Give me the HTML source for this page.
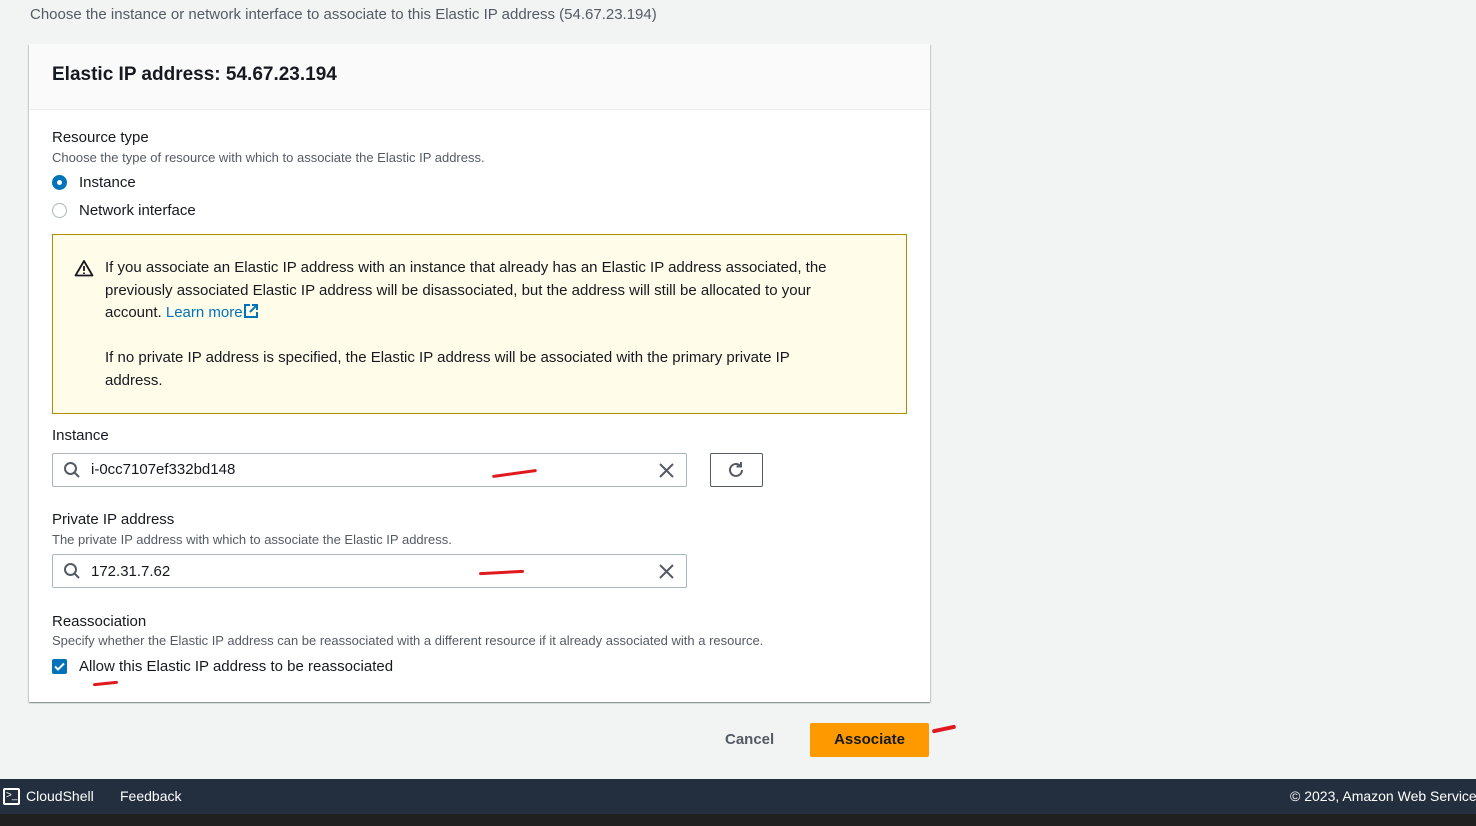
<!DOCTYPE html>
<html><head><style>
*{box-sizing:border-box;margin:0;padding:0}
body{width:1476px;height:826px;overflow:hidden;background:#f2f3f3;font-family:"Liberation Sans",sans-serif;color:#16191f;position:relative;font-size:15px}
.a{position:absolute}
.desc{font-size:13px;color:#545b64}
.lbl{font-size:15px;color:#16191f}
.input{position:absolute;left:52px;width:635px;height:34px;border:1px solid #aab7b8;background:#fff;border-radius:2px}
.red{position:absolute;height:3px;background:#e0191e;border-radius:2px}
</style></head><body>
<div class="a" style="left:30px;top:6px;color:#545b64;font-size:15px">Choose the instance or network interface to associate to this Elastic IP address (54.67.23.194)</div>
<div class="a" style="left:29px;top:44px;width:901px;height:658px;background:#fff;box-shadow:0 1px 1px 0 rgba(0,28,36,.3),1px 1px 1px 0 rgba(0,28,36,.15),-1px 1px 1px 0 rgba(0,28,36,.15)">
 <div style="height:66px;background:#fafafa;border-bottom:1px solid #eaeded;padding:20px 23px;font-size:19px;font-weight:bold">Elastic IP address: 54.67.23.194</div>
</div>
<div class="a lbl" style="left:52px;top:129px">Resource type</div>
<div class="a desc" style="left:52px;top:150px">Choose the type of resource with which to associate the Elastic IP address.</div>
<div class="a" style="left:52px;top:175px;width:15px;height:15px;border-radius:50%;background:#0073bb"><div style="margin:5px;width:5px;height:5px;border-radius:50%;background:#fff"></div></div>
<div class="a lbl" style="left:79px;top:174px">Instance</div>
<div class="a" style="left:52px;top:203px;width:15px;height:15px;border-radius:50%;border:1px solid #aab7b8"></div>
<div class="a lbl" style="left:79px;top:202px">Network interface</div>
<div class="a" style="left:52px;top:234px;width:855px;height:180px;background:#fffce9;border:1px solid #ab8f00"></div>
<svg class="a" style="left:74px;top:259px" width="20" height="18" viewBox="0 0 20 18"><path d="M10 2L18.5 16.5H1.5Z" fill="none" stroke="#16191f" stroke-width="1.8" stroke-linejoin="round"/><path d="M10 7v5M10 13.5v1.5" stroke="#16191f" stroke-width="1.8"/></svg>
<div class="a" style="left:105px;top:257px;width:735px;line-height:22.5px;font-size:15px">If you associate an Elastic IP address with an instance that already has an Elastic IP address associated, the previously associated Elastic IP address will be disassociated, but the address will still be allocated to your account. <span style="color:#0073bb">Learn more</span><svg width="17" height="16" viewBox="0 0 17 16" style="vertical-align:-2px"><path d="M7 2H2v12h12V9M9 2h5v5M14 2L7 9" fill="none" stroke="#0073bb" stroke-width="2"/></svg></div>
<div class="a" style="left:105px;top:347px;width:735px;line-height:22.5px;font-size:15px">If no private IP address is specified, the Elastic IP address will be associated with the primary private IP address.</div>
<div class="a lbl" style="left:52px;top:427px">Instance</div>
<div class="input" style="top:453px"></div>
<svg class="a" style="left:63px;top:461px" width="18" height="18" viewBox="0 0 18 18"><circle cx="7.5" cy="7.5" r="5.5" fill="none" stroke="#545b64" stroke-width="2"/><path d="M11.5 11.5L16 16" stroke="#545b64" stroke-width="2"/></svg>
<div class="a" style="left:91px;top:461px;font-size:15px">i-0cc7107ef332bd148</div>
<svg class="a" style="left:658px;top:462px" width="17" height="17" viewBox="0 0 17 17"><path d="M2 2L15 15M15 2L2 15" stroke="#545b64" stroke-width="2"/></svg>
<div class="red" style="left:492px;top:472px;width:45px;transform:rotate(-8deg)"></div>
<div class="a" style="left:710px;top:453px;width:53px;height:34px;border:1px solid #545b64;border-radius:2px;background:#fff"></div>
<svg class="a" style="left:726px;top:460px" width="20" height="20" viewBox="0 0 20 20"><path d="M16 10a6 6 0 1 1-2-4.5" fill="none" stroke="#545b64" stroke-width="2"/><path d="M15 2v4.5h-4.5" fill="none" stroke="#545b64" stroke-width="2"/></svg>
<div class="a lbl" style="left:52px;top:511px">Private IP address</div>
<div class="a desc" style="left:52px;top:532px">The private IP address with which to associate the Elastic IP address.</div>
<div class="input" style="top:554px"></div>
<svg class="a" style="left:63px;top:562px" width="18" height="18" viewBox="0 0 18 18"><circle cx="7.5" cy="7.5" r="5.5" fill="none" stroke="#545b64" stroke-width="2"/><path d="M11.5 11.5L16 16" stroke="#545b64" stroke-width="2"/></svg>
<div class="a" style="left:91px;top:563px;font-size:15px">172.31.7.62</div>
<svg class="a" style="left:658px;top:563px" width="17" height="17" viewBox="0 0 17 17"><path d="M2 2L15 15M15 2L2 15" stroke="#545b64" stroke-width="2"/></svg>
<div class="red" style="left:479px;top:571px;width:45px;transform:rotate(-3deg)"></div>
<div class="a lbl" style="left:52px;top:613px">Reassociation</div>
<div class="a desc" style="left:52px;top:633px">Specify whether the Elastic IP address can be reassociated with a different resource if it already associated with a resource.</div>
<div class="a" style="left:52px;top:659px;width:15px;height:15px;border-radius:2px;background:#0073bb"><svg width="15" height="15" viewBox="0 0 15 15"><path d="M3 7.5l3 3 6-6" fill="none" stroke="#fff" stroke-width="2"/></svg></div>
<div class="a lbl" style="left:79px;top:658px">Allow this Elastic IP address to be reassociated</div>
<div class="red" style="left:93px;top:682px;width:25px;transform:rotate(-6deg)"></div>
<div class="a" style="left:725px;top:731px;font-weight:bold;color:#545b64;font-size:15px">Cancel</div>
<div class="a" style="left:810px;top:723px;width:119px;height:34px;background:#ff9900;border-radius:2px;text-align:center;line-height:34px;font-weight:bold;font-size:15px">Associate</div>
<div class="red" style="left:932px;top:727px;width:24px;height:4px;transform:rotate(-12deg)"></div>
<div class="a" style="left:0;top:779px;width:1476px;height:35px;background:#232f3e;color:#fff;font-size:14px">
 <div class="a" style="left:3px;top:9px;width:17px;height:17px;border:2px solid #fff;border-radius:2px;font-size:10px;line-height:12px;padding-left:1px">&gt;_</div>
 <div class="a" style="left:26px;top:9px">CloudShell</div>
 <div class="a" style="left:120px;top:9px">Feedback</div>
 <div class="a" style="left:1290px;top:9px;white-space:nowrap">© 2023, Amazon Web Services</div>
</div>
<div class="a" style="left:0;top:814px;width:1476px;height:12px;background:#202020"></div>
</body></html>
